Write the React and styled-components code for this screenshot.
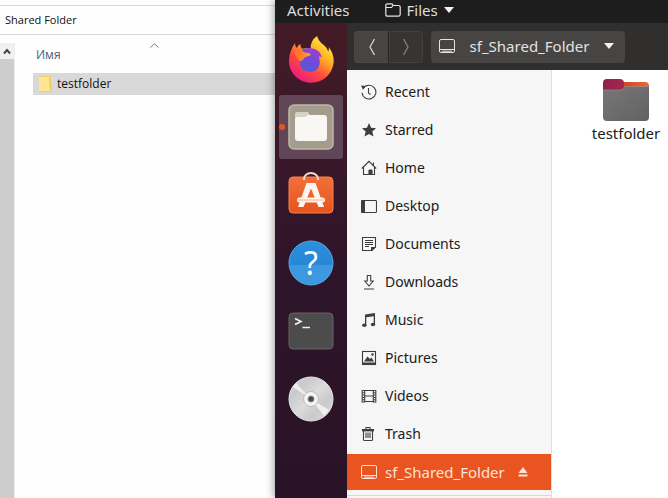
import React from "react";
import styled, { createGlobalStyle } from "styled-components";

const GlobalStyle = createGlobalStyle`
  * { box-sizing: border-box; }
  body { margin: 0; background: #fefefe; }
  button { font: inherit; color: inherit; border: 0; margin: 0; padding: 0; background: none; text-align: left; }
  svg { display: block; flex: none; }
`;

const Screen = styled.div`
  display: grid;
  grid-template-columns: minmax(0, 275fr) minmax(0, 393fr);
  min-height: 100vh;
  overflow: hidden;
`;

/* Explorer window */
const Explorer = styled.section`
  display: flex;
  flex-direction: column;
  padding-top: 5px;
  background: #fefefe;
  color: #111;
  font: 11px/20px "Open Sans", "Noto Sans", sans-serif;
`;

const AddressBar = styled.div`
  display: flex;
  align-items: center;
  height: 30px;
  padding-left: 5px;
  border: solid #d9d9d9;
  border-width: 1px 0;
`;

const ExplorerBody = styled.div`
  display: flex;
  flex: 1;
  padding-top: 8px;
`;

const ScrollTrack = styled.div`
  display: flex;
  flex-direction: column;
  flex: none;
  width: 15px;
  border-right: 1px solid #ececec;
  background: #cdcdcd;
`;

const ScrollUp = styled.button`
  display: grid;
  place-items: center;
  height: 16px;
  background: #f0f0f0;
`;

const FileTable = styled.table`
  flex: 1;
  align-self: flex-start;
  margin-left: 18px;
  border-collapse: collapse;
  font-size: 12px;
`;

const NameHeader = styled.th`
  height: 30px;
  padding: 0 3px;
  color: #4c607a;
  font-weight: 400;
  text-align: left;
  vertical-align: top;
`;

const SortButton = styled.button`
  display: grid;
  grid-template-columns: 1fr auto 1fr;
  width: 100%;
  line-height: 24px;
`;

const FileCell = styled.td`
  height: 22px;
  padding: 0 6px;
  background: #d9d9d9;
`;

const FileName = styled.div`
  display: flex;
  align-items: center;
  gap: 5px;
`;

/* Ubuntu desktop */
const Desktop = styled.section`
  position: relative;
  display: flex;
  flex-direction: column;
  background: #2b1626;
  box-shadow: -1px 0 8px rgba(0, 0, 0, 0.4);
  font: 15px/20px "Noto Sans", "Open Sans", sans-serif;
`;

const TopBar = styled.header`
  display: flex;
  align-items: center;
  gap: 35px;
  height: 23px;
  padding: 0 12px 4px;
  background: #1d1d1d;
  color: #dedede;
`;

const AppMenu = styled.button`
  display: flex;
  align-items: center;
  gap: 6px;
`;

const Workspace = styled.div`
  display: flex;
  flex: 1;
`;

const Dock = styled.nav`
  display: flex;
  flex-direction: column;
  gap: 4px;
  flex: none;
  width: 72px;
  padding: 4px;
  background: linear-gradient(#431b25 0, #3a1829 120px, #2d142a 260px, #291326 100%);
`;

const DockItem = styled.button`
  position: relative;
  display: grid;
  place-items: center;
  height: 64px;
  border-radius: 3px;
  background: ${(p) => (p.$active ? "#604656" : "transparent")};
`;

const RunningDot = styled.span`
  position: absolute;
  left: 0;
  width: 6px;
  height: 6px;
  border-radius: 50%;
  background: #e95420;
`;

const FilesWindow = styled.main`
  display: flex;
  flex-direction: column;
  flex: 1;
  min-width: 0;
  background: #fff;
`;

const HeaderBar = styled.header`
  display: flex;
  align-items: center;
  gap: 8px;
  height: 47px;
  padding: 0 7px;
  background: #302f2e;
  color: #e2e2e2;
`;

const NavGroup = styled.div`
  display: flex;
  flex: none;
`;

const NavButton = styled.button`
  display: grid;
  place-items: center;
  width: ${(p) => (p.$forward ? 34 : 35)}px;
  height: 32px;
  border: 1px solid ${(p) => (p.$forward ? "#434140" : "#4c4946")};
  border-right-color: ${(p) => (p.$forward ? "#434140" : "#252423")};
  border-radius: ${(p) => (p.$forward ? "0 4px 4px 0" : "4px 0 0 4px")};
  background: ${(p) => (p.$forward ? "#373534" : "#474543")};
  color: ${(p) => (p.$forward ? "#888" : "#ddd")};
`;

const PathButton = styled.button`
  display: flex;
  align-items: center;
  justify-content: space-between;
  width: 194px;
  height: 32px;
  padding: 0 11px 2px 8px;
  border-radius: 4px;
  background: #474543;
`;

const Panes = styled.div`
  display: flex;
  flex: 1;
`;

const Sidebar = styled.nav`
  display: flex;
  flex-direction: column;
  gap: 2px;
  flex: none;
  width: 205px;
  padding-top: 4px;
  border-right: 1px solid #dedede;
  background: #f6f6f6;
  color: #202020;
`;

const Place = styled.button`
  display: flex;
  align-items: center;
  gap: 8px;
  height: 36px;
  padding: 0 14px;
  background: ${(p) => (p.$selected ? "#e95420" : "transparent")};
  color: ${(p) => (p.$selected ? "#fce3d8" : "inherit")};
  font-size: ${(p) => (p.$selected ? 15 : 14)}px;
`;

const PlaceName = styled.span`
  flex: 1;
`;

const EjectSlot = styled.span`
  padding-right: 9px;
`;

const Separator = styled.hr`
  width: 100%;
  margin: 3px 0 0;
  border: 0;
  border-top: 1px solid #d8d8d8;
`;

const Content = styled.div`
  flex: 1;
  padding: 9px 0 0 31px;
`;

const FolderItem = styled.button`
  display: flex;
  flex-direction: column;
  align-items: center;
  gap: 1px;
  width: 86px;
  color: #202020;
`;

const Triangle = ({ w = 10 }) => (
  <svg width={w} height="6" viewBox="0 0 10 6"><path d="M0 0h10L5 6z" fill="#f2f2f2" /></svg>
);

const Chevron = ({ forward }) => (
  <svg width="8" height="18" viewBox="0 0 8 18" fill="none" stroke="currentColor" strokeWidth="1.200">
    <path d={forward ? "M1.500 1 6 9l-4.500 8" : "M6.500 1 2 9l4.500 8"} />
  </svg>
);

const Drive = () => (
  <svg width="16" height="16" viewBox="0 0 16 16" fill="none" stroke="currentColor">
    <rect x=".5" y="1.500" width="15" height="13" rx="1.500" />
    <path d="M1 11.500h14M3 13.200h10" />
  </svg>
);

const stroke = { fill: "none", stroke: "#3d3d3d", strokeWidth: 1.1 };
const fill = { fill: "#3d3d3d" };

const glyphs = {
  Recent: (
    <g {...stroke}>
      <path d="M2.300 4.200A6.900 6.900 0 1 1 1.100 8.700" />
      <path d="M7.500 4v5l2 1.500" />
      <path d="M0 1.500 4.800 2 2 5.800z" fill="#3d3d3d" stroke="none" />
    </g>
  ),
  Starred: <path {...fill} d="m8 1 2.100 4.800 5 .4-3.800 3.400 1.200 5L8 12l-4.500 2.600 1.200-5L1 6.200l5-.4z" />,
  Home: (
    <g {...stroke}>
      <path d="M.8 8.500 8 1.300l7.200 7.200M2.500 7.500v7H8v-4h3v4h2.500v-7M12.500 2.500V6" />
      <path d="M8 9.500h3V15H8z" fill="#3d3d3d" stroke="none" />
    </g>
  ),
  Desktop: (
    <g>
      <rect x=".5" y="2.500" width="15" height="12" rx="1" {...stroke} />
      <path {...fill} d="M0 2.500h4v12H0z" />
    </g>
  ),
  Documents: (
    <g>
      <path {...stroke} d="M1.500 1.500h13V11L11 14.500H1.500z" />
      <path {...stroke} d="M4 4.500h8M4 6.500h8M4 8.500h8M4 10.500h4" />
      <path {...fill} d="M10 15v-4h5z" />
    </g>
  ),
  Downloads: <path {...stroke} d="M6.300 1.500h3.400V7h2.500L8 12 3.800 7h2.500zM3 15h10" />,
  Music: (
    <g {...fill}>
      <path d="M4 2.500 14 1v11.500h-1.300V4.200L5.300 5.300v8.200H4z" />
      <ellipse cx="3.300" cy="13.300" rx="2.200" ry="1.800" />
      <ellipse cx="12" cy="12.500" rx="2.200" ry="1.800" />
    </g>
  ),
  Pictures: (
    <g>
      <rect x="1.500" y="1.500" width="13" height="13" {...stroke} />
      <path {...fill} d="M1 12.500h14V15H1zM3 11.500l3.500-5L9 9l1.500-1.500 2.500 4z" />
      <circle cx="11.500" cy="4.500" r="1.200" {...fill} />
    </g>
  ),
  Videos: (
    <g {...stroke}>
      <path d="M3.700 2v12.500M12.300 2v12.500M3.700 2.500h8.600M3.700 8h8.600M3.700 13.500h8.600M1.200 2v12.500M14.800 2v12.500" />
      <path d="M2.500 2v12.500M13.500 2v12.500" strokeDasharray="1 1.300" strokeWidth="2" />
    </g>
  ),
  Trash: (
    <g {...stroke}>
      <path d="M2.500 5v8.500q0 1 1 1h7q1 0 1-1V5M5 6.500V12M7 6.500V12M9 6.500V12M5 3V1.500h4V3" />
      <path d="M1 4.200h12" strokeWidth="2.400" />
    </g>
  ),
};

const Glyph = ({ name }) => (
  <svg width="16" height="16" viewBox="0 0 16 16">{glyphs[name]}</svg>
);

const Firefox = () => (
  <svg width="47" height="47" viewBox="42 46 141 141">
    <defs>
      <linearGradient id="ffBody" x1=".85" y1=".05" x2=".2" y2=".95">
        <stop offset="0" stopColor="#fff14b" />
        <stop offset=".35" stopColor="#ffae22" />
        <stop offset=".65" stopColor="#ff4a3d" />
        <stop offset="1" stopColor="#e91985" />
      </linearGradient>
      <linearGradient id="ffArm" x1="0" y1="0" x2="1" y2="0">
        <stop offset="0" stopColor="#ff6432" />
        <stop offset="1" stopColor="#ffa32a" />
      </linearGradient>
      <linearGradient id="ffGlobe" x1=".8" y1="0" x2=".3" y2="1">
        <stop offset="0" stopColor="#a33fd0" />
        <stop offset=".5" stopColor="#7449d6" />
        <stop offset="1" stopColor="#5558dd" />
      </linearGradient>
    </defs>
    <path fill="url(#ffBody)" d="M63 68q0 9 5 14 5-9 11-12 0 9 5 14 13-3 26-1-1-23 19-37 6 18 21 28 9 7 13 19 3-6 1-14 17 22 15 45c-3 35-31 62-66 62-40 0-69-32-68-66 1-20 6-36 18-52z" />
    <path fill="url(#ffGlobe)" d="M86 86c26-10 53 0 58 25-4-3-7-4-9-3 8 26-5 45-26 45-21 0-33-14-31-33z" />
    <path fill="url(#ffArm)" d="M58 90c12-6 24-4 32 5 9 2 18 2 20 6 0 7-16 6-20 12-3 4-4 7-10 9-7-3-17-18-22-32z" />
  </svg>
);

const FilesApp = () => (
  <svg width="46" height="46" viewBox="0 0 46 46">
    <rect x="1" y="1" width="44" height="44" rx="5" fill="#a49c8c" stroke="#c0b8a8" strokeWidth="1.500" />
    <path d="M7 11q0-3 2-3h10q2 0 3 4v8H7z" fill="#d8d1c5" />
    <path d="M7 16q0-3 2-3h8l3-2h16q3 0 3 3v20q0 3-3 3H10q-3 0-3-3z" fill="#f9f7f4" />
  </svg>
);

const Software = () => (
  <svg width="46" height="46" viewBox="0 0 46 46">
    <defs>
      <linearGradient id="bag" x2="0" y2="1"><stop stopColor="#f2703a" /><stop offset="1" stopColor="#e7531f" /></linearGradient>
    </defs>
    <rect x="1" y="5" width="44" height="36" rx="4" fill="url(#bag)" stroke="#f5844f" />
    <path d="M16 8V7a7 6 0 0 1 14 0v1" fill="none" stroke="#f4d7c9" strokeWidth="2" />
    <g fill="#fff4ec">
      <path d="M18.500 11h9L36 35h-5.500L23 16.500 15.500 35H10z" />
      <rect x="9" y="25.500" width="28" height="5" rx="2.500" />
    </g>
    <path d="M10 28h26" stroke="#f3b194" strokeWidth="1" />
  </svg>
);

const Help = () => (
  <svg width="46" height="46" viewBox="0 0 46 46">
    <defs>
      <linearGradient id="help" x2="0" y2="1"><stop stopColor="#2c8fdc" /><stop offset=".53" stopColor="#2687d6" /><stop offset=".56" stopColor="#3d98df" /><stop offset="1" stopColor="#3c99df" /></linearGradient>
    </defs>
    <circle cx="23" cy="23" r="22" fill="url(#help)" stroke="#57aae8" />
    <text x="23" y="35" textAnchor="middle" fontFamily="Noto Sans, sans-serif" fontSize="32" fill="#fff">?</text>
  </svg>
);

const Terminal = () => (
  <svg width="46" height="46" viewBox="0 0 46 46">
    <rect x="1" y="5" width="44" height="36" rx="4" fill="#4b4c4b" stroke="#686466" />
    <path d="m7 10.500 6 3-6 3M14.500 19.500h7.500" fill="none" stroke="#f3f3f3" strokeWidth="1.600" />
  </svg>
);

const Disc = () => (
  <svg width="46" height="46" viewBox="0 0 46 46">
    <defs>
      <linearGradient id="disc" x2="1" y2="1">
        <stop stopColor="#d3d3d3" /><stop offset=".25" stopColor="#cacaca" /><stop offset=".5" stopColor="#dcdcdc" />
        <stop offset=".7" stopColor="#cacaca" /><stop offset="1" stopColor="#d8d8d8" />
      </linearGradient>
    </defs>
    <circle cx="23" cy="23" r="22" fill="url(#disc)" stroke="#e8e8e8" />
    <path d="m23 23-15-16-3 4zM23 23l18 11-5 6z" fill="#efefef" />
    <circle cx="23" cy="23" r="7.500" fill="#f3f3f3" stroke="#aaa" strokeWidth=".7" />
    <circle cx="23" cy="23" r="3" fill="#494949" stroke="#8b8b8b" />
  </svg>
);

const UbuntuFolder = () => (
  <svg width="48" height="43" viewBox="0 0 48 43">
    <defs>
      <linearGradient id="fback"><stop stopColor="#8d2050" /><stop offset=".45" stopColor="#a5284b" /><stop offset=".46" stopColor="#cf4531" /><stop offset="1" stopColor="#ed6930" /></linearGradient>
      <linearGradient id="ffront" x2="1" y2="1"><stop stopColor="#777" /><stop offset="1" stopColor="#626262" /></linearGradient>
    </defs>
    <path d="M1 14V4q0-4 4-4h13q3 0 4 3h21q4 0 4 4v8z" fill="url(#fback)" />
    <path d="M1 11h17q3 0 5-3.500h24V38q0 4-4 4H5q-4 0-4-4z" fill="url(#ffront)" />
    <path d="M1 11h17q3 0 5-3.500h24" fill="none" stroke="#a58b84" strokeWidth=".7" />
  </svg>
);

const dockApps = [
  ["Firefox", Firefox],
  ["Files", FilesApp],
  ["Ubuntu Software", Software],
  ["Help", Help],
  ["Terminal", Terminal],
  ["Disc", Disc],
];

export default function App() {
  return (
    <>
      <GlobalStyle />
      <Screen>
        <Explorer>
          <AddressBar><button>Shared Folder</button></AddressBar>
          <ExplorerBody>
            <ScrollTrack>
              <ScrollUp aria-label="Scroll up">
                <svg width="8" height="7" viewBox="0 0 8 7"><path d="M1 5.500 4 2l3 3.500" fill="none" stroke="#444" strokeWidth="2" /></svg>
              </ScrollUp>
            </ScrollTrack>
            <FileTable>
              <thead>
                <tr>
                  <NameHeader>
                    <SortButton>
                      <span>Имя</span>
                      <svg width="9" height="5" viewBox="0 0 9 5"><path d="M.5 4.500 4.500.7l4 3.800" fill="none" stroke="#777" /></svg>
                    </SortButton>
                  </NameHeader>
                </tr>
              </thead>
              <tbody>
                <tr>
                  <FileCell>
                    <FileName>
                      <svg width="13" height="16" viewBox="0 0 13 16">
                        <path d="M0 1q0-1 1-1h10q1 0 1 1v7l1 1v6q0 1-1 1H0z" fill="#efcf66" />
                        <path d="M0 1h10v9l1 5H0z" fill="#ffe590" />
                      </svg>
                      testfolder
                    </FileName>
                  </FileCell>
                </tr>
              </tbody>
            </FileTable>
          </ExplorerBody>
        </Explorer>

        <Desktop>
          <TopBar>
            <button>Activities</button>
            <AppMenu>
              <svg width="16" height="14" viewBox="0 0 16 14" fill="none" stroke="#e6e6e6" strokeWidth="1.200">
                <path d="M.8 2.500Q.8.800 2.500.800h4Q8 .8 8 2.500h5.500q1.700 0 1.700 1.500v7.500q0 1.700-1.700 1.700h-11q-1.700 0-1.700-1.700zM1 4.500h5.500l1.500-2" />
              </svg>
              Files
              <Triangle />
            </AppMenu>
          </TopBar>
          <Workspace>
            <Dock aria-label="Dock">
              {dockApps.map(([name, Icon]) => (
                <DockItem key={name} aria-label={name} $active={name === "Files"}>
                  {name === "Files" && <RunningDot />}
                  <Icon />
                </DockItem>
              ))}
            </Dock>
            <FilesWindow>
              <HeaderBar>
                <NavGroup>
                  <NavButton aria-label="Back"><Chevron /></NavButton>
                  <NavButton aria-label="Forward" $forward><Chevron forward /></NavButton>
                </NavGroup>
                <PathButton>
                  <Drive />
                  sf_Shared_Folder
                  <Triangle />
                </PathButton>
              </HeaderBar>
              <Panes>
                <Sidebar aria-label="Places">
                  {Object.keys(glyphs).map((name) => (
                    <Place key={name}>
                      <Glyph name={name} />
                      <PlaceName>{name}</PlaceName>
                    </Place>
                  ))}
                  <Place $selected>
                    <Drive />
                    <PlaceName>sf_Shared_Folder</PlaceName>
                    <EjectSlot>
                      <svg width="10" height="10" viewBox="0 0 10 10"><path d="m5 0 4.500 6H.5zM.5 7.500h9v2h-9z" fill="currentColor" /></svg>
                    </EjectSlot>
                  </Place>
                  <Separator />
                </Sidebar>
                <Content>
                  <FolderItem>
                    <UbuntuFolder />
                    testfolder
                  </FolderItem>
                </Content>
              </Panes>
            </FilesWindow>
          </Workspace>
        </Desktop>
      </Screen>
    </>
  );
}
